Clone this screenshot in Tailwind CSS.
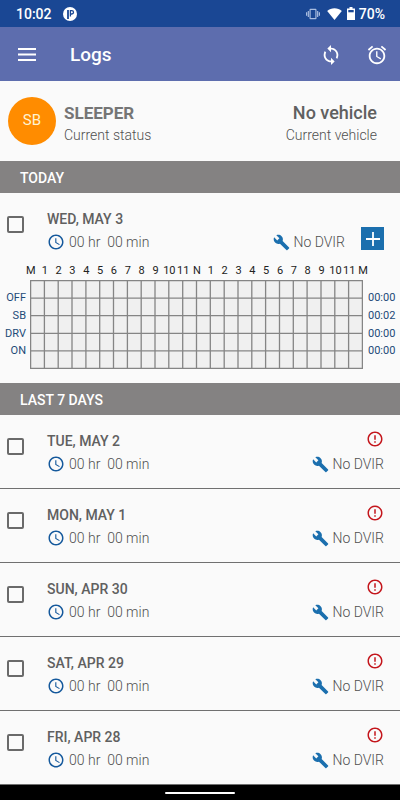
<!DOCTYPE html>
<html lang="en">
<head>
<meta charset="utf-8">
<meta name="viewport" content="width=device-width, initial-scale=1">
<title>Logs</title>
<script src="https://cdn.jsdelivr.net/npm/@tailwindcss/browser@4"></script>
</head>
<body class="flex min-h-screen flex-col bg-[#fafafa] font-[Roboto,'Noto_Sans',sans-serif] text-sm font-light text-[#505050]">

<!-- Shared icons -->
<svg class="hidden" aria-hidden="true">
  <symbol id="clock" viewBox="0 0 24 24"><path d="M11.99 2C6.47 2 2 6.48 2 12s4.47 10 9.99 10C17.52 22 22 17.52 22 12S17.52 2 11.99 2zM12 20c-4.42 0-8-3.58-8-8s3.58-8 8-8 8 3.58 8 8-3.58 8-8 8zm.5-13H11v6l5.25 3.15.75-1.23-4.5-2.67z"/></symbol>
  <symbol id="wrench" viewBox="0 0 24 24"><path d="M22.7 19l-9.1-9.1c.9-2.3.4-5-1.5-6.9-2-2-5-2.4-7.4-1.3L9 6 6 9 1.6 4.7C.4 7.1.9 10.1 2.9 12.1c1.9 1.9 4.6 2.4 6.9 1.5l9.1 9.1c.4.4 1 .4 1.4 0l2.3-2.3c.5-.4.5-1.1.1-1.4z"/></symbol>
  <symbol id="alert" viewBox="0 0 24 24"><path d="M11 15h2v2h-2zm0-8h2v6h-2zm.99-5C6.47 2 2 6.48 2 12s4.47 10 9.99 10C17.52 22 22 17.52 22 12S17.52 2 11.99 2zM12 20c-4.42 0-8-3.58-8-8s3.58-8 8-8 8 3.58 8 8-3.58 8-8 8z"/></symbol>
</svg>

<div class="flex h-[27px] items-center bg-[#1a4794] pr-[15px] pl-4 text-sm font-medium text-white">
  <span>10:02</span>
  <svg class="ml-[11px] size-[14px]" viewBox="0 0 14 14"><circle cx="7" cy="7" r="7" fill="#fff"/><path d="M5 3v9" fill="none" stroke="#1a4794" stroke-width="1.8"/><path d="M7.4 9.5V3.6h1.4a1.6 1.6 0 0 1 0 3.400H7.400" fill="none" stroke="#1a4794" stroke-width="1.3"/></svg>
  <svg class="ml-auto size-[14px]" viewBox="0 0 24 24" fill="#a9bde0"><path d="M0 15h2V9H0v6zm3 2h2V7H3v10zm19-8v6h2V9h-2zm-3 8h2V7h-2v10zM16.500 3h-9C6.670 3 6 3.670 6 4.500v15c0 .83.67 1.500 1.500 1.500h9c.83 0 1.500-.67 1.500-1.500v-15c0-.83-.67-1.500-1.500-1.500zM16 19H8V5h8v14z"/></svg>
  <svg class="ml-[7px] h-[12px] w-[15px]" viewBox="0 0 15 12"><path d="M7.500 12 .2 3C2.200 1.200 4.700.2 7.500.2s5.300 1 7.300 2.800z" fill="#fff"/></svg>
  <svg class="ml-[5px] h-[13px] w-[8px]" viewBox="0 0 8 13"><path d="M2.500 0h3v1.500H8V13H0V1.500h2.500z" fill="#fff"/><path d="M1.300 3h5.400v2.300H1.300z" fill="#1a4794"/></svg>
  <span class="ml-1">70%</span>
</div>

<header class="flex h-[54px] items-center bg-[#5d6dae] px-[11px] pt-px text-white">
  <button type="button" aria-label="Menu" class="flex size-8 items-center justify-center"><svg class="h-[14px] w-[18px]" viewBox="0 0 18 14" fill="#fff"><path d="M0 0h18v2H0zM0 5.500h18v2H0zM0 11h18v2H0z"/></svg></button>
  <h1 class="ml-[27px] text-[19px] font-medium">Logs</h1>
  <button type="button" aria-label="Sync" class="ml-auto flex size-8 items-center justify-center"><svg class="size-[22px]" viewBox="0 0 24 24" fill="#fff"><path d="M12 4V1L8 5l4 4V6c3.310 0 6 2.690 6 6 0 1.010-.25 1.970-.7 2.800l1.460 1.460C19.540 15.030 20 13.570 20 12c0-4.420-3.580-8-8-8zm0 14c-3.310 0-6-2.690-6-6 0-1.010.25-1.970.7-2.800L5.240 7.740C4.460 8.970 4 10.430 4 12c0 4.420 3.580 8 8 8v3l4-4-4-4v3z"/></svg></button>
  <button type="button" aria-label="Alarm" class="-mr-1 ml-[14px] flex size-8 items-center justify-center"><svg class="size-[22px]" viewBox="0 0 24 24" fill="#fff"><path d="M22 5.720l-4.600-3.860-1.290 1.530 4.600 3.860L22 5.720zM7.880 3.390L6.600 1.860 2 5.710l1.290 1.530 4.590-3.850zM12.500 8H11v6l4.750 2.850.75-1.230-4-2.370V8zM12 4c-4.970 0-9 4.030-9 9s4.020 9 9 9c4.970 0 9-4.030 9-9s-4.030-9-9-9zm0 16c-3.870 0-7-3.130-7-7s3.130-7 7-7 7 3.130 7 7-3.130 7-7 7z"/></svg></button>
</header>

<main class="flex-1">
  <section class="flex h-20 items-center pr-[23px] pl-2">
    <div class="flex size-12 items-center justify-center rounded-full bg-[#ff8c00] text-[15px] font-normal text-[#fff3d0]">SB</div>
    <div class="ml-2 pt-1">
      <p class="text-[17px] leading-6 font-bold text-[#757575]">SLEEPER</p>
      <p class="leading-5">Current status</p>
    </div>
    <div class="ml-auto pt-1 text-right">
      <p class="text-lg leading-6 font-medium text-[#606060]">No vehicle</p>
      <p class="leading-5">Current vehicle</p>
    </div>
  </section>

  <h2 class="flex h-8 items-center bg-[#848282] px-5 pt-px font-medium text-white">TODAY</h2>

  <section class="h-[190px]">
    <div class="flex h-[70px] pt-[15px] pr-4 pl-[7px]">
      <input type="checkbox" aria-label="Select Wed, May 3" class="mt-2 size-[17px] shrink-0 appearance-none rounded-xs border-2 border-[#6a6a6a] checked:bg-[#1b6fae]">
      <div class="ml-[23px]">
        <h3 class="leading-[22px] font-medium text-[#606060]">WED, MAY 3</h3>
        <p class="flex items-center leading-6"><svg class="mr-1 size-[18px]" fill="#15599c"><use href="#clock"/></svg><span class="whitespace-pre">00 hr  00 min</span></p>
      </div>
      <p class="mt-[22px] ml-auto flex h-6 items-center"><svg class="mr-1 size-[17px]" fill="#1b6fae"><use href="#wrench"/></svg>No DVIR</p>
      <button type="button" aria-label="Add" class="mt-[19px] ml-4 flex size-[23px] items-center justify-center bg-[#1b6fae]"><svg class="size-[14px]" viewBox="0 0 14 14"><path d="M7 0v14M0 7h14" stroke="#fff" stroke-width="1.8"/></svg></button>
    </div>

    <div class="mr-[30px] ml-6 grid h-[17px] grid-cols-[repeat(25,minmax(0,1fr))] justify-items-center text-[11px] leading-4 font-normal text-[#222]">
      <span>M</span><span>1</span><span>2</span><span>3</span><span>4</span><span>5</span><span>6</span><span>7</span><span>8</span><span>9</span><span>10</span><span>11</span><span>N</span><span>1</span><span>2</span><span>3</span><span>4</span><span>5</span><span>6</span><span>7</span><span>8</span><span>9</span><span>10</span><span>11</span><span>M</span>
    </div>
    <div class="flex h-[89px] text-[11px] font-normal text-[#1d4a78]">
      <div class="grid w-[30px] grid-rows-4 items-center py-[9px] pr-1 text-right"><span>OFF</span><span>SB</span><span>DRV</span><span>ON</span></div>
      <svg class="h-full min-w-0 flex-1" viewBox="0 0 333 89" preserveAspectRatio="none" role="img" aria-label="Duty status by hour">
        <path d="M0 0h333v89H0z" fill="#f0f0f0"/>
        <g fill="none" stroke="#858585" stroke-width="1.300">
          <path d="M.6.6h331.800v87.800H.6z"/>
          <path d="M0 18.100h333M0 35.700h333M0 53.300h333M0 70.900h333"/>
          <path d="M14.400 0v89M28.200 0v89M42 0v89M55.900 0v89M69.700 0v89M83.500 0v89M97.400 0v89M111.200 0v89M125 0v89M138.800 0v89M152.700 0v89M166.500 0v89M180.300 0v89M194.200 0v89M208 0v89M221.800 0v89M235.600 0v89M249.500 0v89M263.300 0v89M277.100 0v89M291 0v89M304.800 0v89M318.600 0v89"/>
        </g>
      </svg>
      <div class="grid w-[37px] grid-rows-4 items-center py-[9px] pl-[5px]"><span>00:00</span><span>00:02</span><span>00:00</span><span>00:00</span></div>
    </div>
  </section>

  <h2 class="flex h-8 items-center bg-[#848282] px-5 pt-px font-medium text-white">LAST 7 DAYS</h2>

  <ul>
    <li class="flex h-[74px] border-b border-[#707070] pt-[15px] pr-4 pl-[7px]">
      <input type="checkbox" aria-label="Select Tue, May 2" class="mt-2 size-[17px] shrink-0 appearance-none rounded-xs border-2 border-[#6a6a6a] checked:bg-[#1b6fae]">
      <div class="ml-[23px]">
        <h3 class="leading-[22px] font-medium text-[#606060]">TUE, MAY 2</h3>
        <p class="flex items-center leading-6"><svg class="mr-1 size-[18px]" fill="#15599c"><use href="#clock"/></svg><span class="whitespace-pre">00 hr  00 min</span></p>
      </div>
      <div class="ml-auto flex flex-col items-end">
        <svg class="mb-1 size-[18px]" fill="#c4161c" role="img" aria-label="Alert"><use href="#alert"/></svg>
        <p class="flex h-6 items-center"><svg class="mr-1 size-[17px]" fill="#1b6fae"><use href="#wrench"/></svg>No DVIR</p>
      </div>
    </li>
    <li class="flex h-[74px] border-b border-[#707070] pt-[15px] pr-4 pl-[7px]">
      <input type="checkbox" aria-label="Select Mon, May 1" class="mt-2 size-[17px] shrink-0 appearance-none rounded-xs border-2 border-[#6a6a6a] checked:bg-[#1b6fae]">
      <div class="ml-[23px]">
        <h3 class="leading-[22px] font-medium text-[#606060]">MON, MAY 1</h3>
        <p class="flex items-center leading-6"><svg class="mr-1 size-[18px]" fill="#15599c"><use href="#clock"/></svg><span class="whitespace-pre">00 hr  00 min</span></p>
      </div>
      <div class="ml-auto flex flex-col items-end">
        <svg class="mb-1 size-[18px]" fill="#c4161c" role="img" aria-label="Alert"><use href="#alert"/></svg>
        <p class="flex h-6 items-center"><svg class="mr-1 size-[17px]" fill="#1b6fae"><use href="#wrench"/></svg>No DVIR</p>
      </div>
    </li>
    <li class="flex h-[74px] border-b border-[#707070] pt-[15px] pr-4 pl-[7px]">
      <input type="checkbox" aria-label="Select Sun, Apr 30" class="mt-2 size-[17px] shrink-0 appearance-none rounded-xs border-2 border-[#6a6a6a] checked:bg-[#1b6fae]">
      <div class="ml-[23px]">
        <h3 class="leading-[22px] font-medium text-[#606060]">SUN, APR 30</h3>
        <p class="flex items-center leading-6"><svg class="mr-1 size-[18px]" fill="#15599c"><use href="#clock"/></svg><span class="whitespace-pre">00 hr  00 min</span></p>
      </div>
      <div class="ml-auto flex flex-col items-end">
        <svg class="mb-1 size-[18px]" fill="#c4161c" role="img" aria-label="Alert"><use href="#alert"/></svg>
        <p class="flex h-6 items-center"><svg class="mr-1 size-[17px]" fill="#1b6fae"><use href="#wrench"/></svg>No DVIR</p>
      </div>
    </li>
    <li class="flex h-[74px] border-b border-[#707070] pt-[15px] pr-4 pl-[7px]">
      <input type="checkbox" aria-label="Select Sat, Apr 29" class="mt-2 size-[17px] shrink-0 appearance-none rounded-xs border-2 border-[#6a6a6a] checked:bg-[#1b6fae]">
      <div class="ml-[23px]">
        <h3 class="leading-[22px] font-medium text-[#606060]">SAT, APR 29</h3>
        <p class="flex items-center leading-6"><svg class="mr-1 size-[18px]" fill="#15599c"><use href="#clock"/></svg><span class="whitespace-pre">00 hr  00 min</span></p>
      </div>
      <div class="ml-auto flex flex-col items-end">
        <svg class="mb-1 size-[18px]" fill="#c4161c" role="img" aria-label="Alert"><use href="#alert"/></svg>
        <p class="flex h-6 items-center"><svg class="mr-1 size-[17px]" fill="#1b6fae"><use href="#wrench"/></svg>No DVIR</p>
      </div>
    </li>
    <li class="flex h-[74px] border-b border-[#707070] pt-[15px] pr-4 pl-[7px]">
      <input type="checkbox" aria-label="Select Fri, Apr 28" class="mt-2 size-[17px] shrink-0 appearance-none rounded-xs border-2 border-[#6a6a6a] checked:bg-[#1b6fae]">
      <div class="ml-[23px]">
        <h3 class="leading-[22px] font-medium text-[#606060]">FRI, APR 28</h3>
        <p class="flex items-center leading-6"><svg class="mr-1 size-[18px]" fill="#15599c"><use href="#clock"/></svg><span class="whitespace-pre">00 hr  00 min</span></p>
      </div>
      <div class="ml-auto flex flex-col items-end">
        <svg class="mb-1 size-[18px]" fill="#c4161c" role="img" aria-label="Alert"><use href="#alert"/></svg>
        <p class="flex h-6 items-center"><svg class="mr-1 size-[17px]" fill="#1b6fae"><use href="#wrench"/></svg>No DVIR</p>
      </div>
    </li>
  </ul>
</main>

<footer class="flex h-[15px] items-center justify-center bg-black"><div class="h-[2px] w-[70px] rounded-full bg-white"></div></footer>
</body>
</html>
